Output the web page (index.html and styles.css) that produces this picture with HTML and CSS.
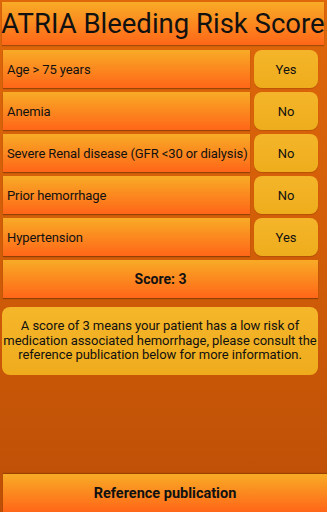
FILE: index.html
```html
<!DOCTYPE html>
<html lang="en">
<head>
    <meta charset="UTF-8">
    <meta name="viewport" content="width=device-width, initial-scale=1.0">
    <title>ATRIA Bleeding Risk Score</title>
    <link rel="stylesheet" href="styles.css">
</head>
<body>
    <div class="screen">
        <!-- Title -->
        <h1 class="title">ATRIA Bleeding Risk Score</h1>

        <!-- Criteria -->
        <div class="rows">
            <div class="row">
                <div class="label">Age &gt; 75 years</div>
                <button class="toggle">Yes</button>
            </div>
            <div class="row">
                <div class="label">Anemia</div>
                <button class="toggle">No</button>
            </div>
            <div class="row">
                <div class="label">Severe Renal disease (GFR &lt;30 or dialysis)</div>
                <button class="toggle">No</button>
            </div>
            <div class="row">
                <div class="label">Prior hemorrhage</div>
                <button class="toggle">No</button>
            </div>
            <div class="row">
                <div class="label">Hypertension</div>
                <button class="toggle">Yes</button>
            </div>
            <div class="score">Score: 3</div>
        </div>

        <!-- Interpretation -->
        <div class="info">
            A score of 3 means your patient has a low risk of medication associated hemorrhage, please consult the reference publication below for more information.
        </div>

        <!-- Footer -->
        <button class="reference">Reference publication</button>
    </div>
</body>
</html>
```

FILE: styles.css
```css
html, body {
    margin: 0;
    padding: 0;
}

body {
    font-family: Roboto, "Liberation Sans", sans-serif;
    color: #111;
    background: #c9560a;
}

.screen {
    height: 512px;
    display: flex;
    flex-direction: column;
    background: linear-gradient(to bottom, #df670b, #d15d08 50%, #bd4f06);
    box-sizing: border-box;
    padding: 2px 0 0 0;
    overflow: hidden;
}

.title {
    margin: 0 3px 0 2px;
    height: 43px;
    display: flex;
    align-items: center;
    justify-content: center;
    font-size: 27.5px;
    font-weight: 400;
    white-space: nowrap;
    letter-spacing: 0;
    background: linear-gradient(to bottom, #f8ab26, #ff6618);
    box-shadow: 0 1px 1px rgba(0, 0, 0, 0.25);
}

.rows {
    display: flex;
    flex-direction: column;
    gap: 4px;
    margin: 5px 9px 0 3px;
}

.row {
    display: flex;
    gap: 4px;
    height: 38px;
}

.label {
    flex: 1;
    min-width: 0;
    display: flex;
    align-items: center;
    padding-left: 4px;
    font-size: 13px;
    white-space: nowrap;
    letter-spacing: -0.1px;
    background: linear-gradient(to bottom, #f8ab26, #ff6618);
    box-shadow: 0 1px 1px rgba(0, 0, 0, 0.3);
}

.toggle {
    width: 64px;
    flex: none;
    border: none;
    border-radius: 8px;
    font-family: inherit;
    font-size: 13px;
    color: #111;
    background: linear-gradient(to bottom, #f5b52a, #eead1c);
    box-shadow: 0 1px 1px rgba(0, 0, 0, 0.15);
    padding: 0;
}

.score {
    height: 38px;
    display: flex;
    align-items: center;
    justify-content: center;
    font-size: 14px;
    font-weight: 700;
    background: linear-gradient(to bottom, #f8ab26, #ff6618);
    box-shadow: 0 1px 1px rgba(0, 0, 0, 0.3);
}

.info {
    margin: 9px 9px 0 2px;
    padding: 12px 1px 12px;
    border-radius: 8px;
    text-align: center;
    font-size: 13px;
    line-height: 14.5px;
    letter-spacing: -0.05px;
    background: linear-gradient(to bottom, #f6b62a, #eeac1d);
}

.reference {
    margin-top: auto;
    margin-left: 3px;
    height: 38px;
    border: none;
    font-family: inherit;
    font-size: 14.5px;
    font-weight: 700;
    color: #111;
    background: linear-gradient(to bottom, #f8ab26, #ff6618);
    box-shadow: 0 -1px 1px rgba(0, 0, 0, 0.2);
}
```
